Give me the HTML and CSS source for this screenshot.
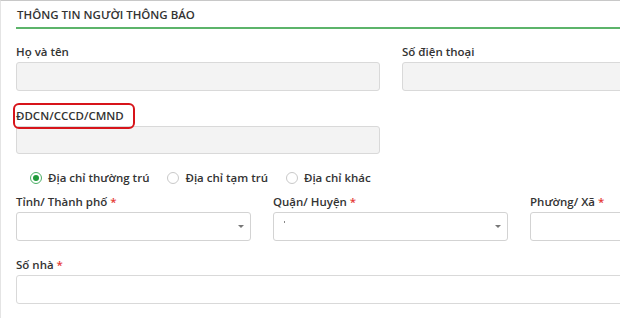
FILE: index.html
```html
<!DOCTYPE html>
<html lang="vi">
  <head>
    <meta charset="UTF-8" />
    <meta name="viewport" content="width=device-width, initial-scale=1.0" />
    <title>Thông tin người thông báo</title>
    <link rel="stylesheet" href="styles.css">
  </head>
  <body>
    <div class="panel">
      <h2 class="section-title">THÔNG TIN NGƯỜI THÔNG BÁO</h2>
      <form>
        <div class="row two-cols">
          <div class="field">
            <label for="fullname">Họ và tên</label>
            <input type="text" id="fullname" class="readonly" disabled />
          </div>
          <div class="field">
            <label for="phone">Số điện thoại</label>
            <input type="text" id="phone" class="readonly" disabled />
          </div>
        </div>

        <div class="row two-cols">
          <div class="field">
            <label for="idcard"><span class="marked">ĐDCN/CCCD/CMND</span></label>
            <input type="text" id="idcard" class="readonly" disabled />
          </div>
        </div>

        <div class="radio-row">
          <label class="radio"><span class="dot checked"></span>Địa chỉ thường trú</label>
          <label class="radio"><span class="dot"></span>Địa chỉ tạm trú</label>
          <label class="radio"><span class="dot"></span>Địa chỉ khác</label>
        </div>

        <div class="row three-cols">
          <div class="field">
            <label>Tỉnh/ Thành phố <span class="req">*</span></label>
            <div class="select"><span class="caret"></span></div>
          </div>
          <div class="field">
            <label>Quận/ Huyện <span class="req">*</span></label>
            <div class="select"><span class="speck"></span><span class="caret"></span></div>
          </div>
          <div class="field">
            <label>Phường/ Xã <span class="req">*</span></label>
            <div class="select"><span class="caret"></span></div>
          </div>
        </div>

        <div class="row">
          <div class="field">
            <label for="houseno">Số nhà <span class="req">*</span></label>
            <input type="text" id="houseno" />
          </div>
        </div>
      </form>
    </div>
  </body>
</html>
```

FILE: styles.css
```css
body {
  margin: 0;
  font-family: "Open Sans", "Noto Sans", sans-serif;
  font-size: 11.5px;
  color: #333;
  background: #fff;
  overflow: hidden;
}
.panel {
  width: 770px;
  border-top: 1px solid #c8c8c8;
  border-left: 1px solid #e4e4e4;
  padding: 0 0 20px 15px;
}
.section-title {
  margin: 0;
  padding: 6px 0 0 1px;
  height: 20px;
  line-height: 15px;
  font-size: 11.5px;
  font-weight: 600;
  color: #333;
  border-bottom: 2px solid #5cb46a;
}
form {
  padding-top: 13px;
}
.row {
  display: grid;
  gap: 22px;
}
.two-cols {
  grid-template-columns: 364px 364px;
  margin-bottom: 15px;
}
.three-cols {
  grid-template-columns: 235px 235px 235px;
  margin-bottom: 14px;
}
.field label {
  display: block;
  height: 14px;
  padding-top: 2px;
  line-height: 16px;
  margin-bottom: 4px;
  font-weight: 600;
  font-size: 11.5px;
  color: #333;
}
input {
  display: block;
  box-sizing: border-box;
  width: 100%;
  height: 29px;
  margin: 0;
  border: 1px solid #d9d9d9;
  border-radius: 3px;
  background: #fff;
  font-family: inherit;
  font-size: 12px;
}
input.readonly {
  background: #f3f3f3;
}
#idcard {
  height: 28px;
}
.req {
  color: #e53935;
}
/* red annotation frame around the id label */
.marked {
  position: relative;
}
.marked::after {
  content: "";
  position: absolute;
  left: -3px;
  right: -11px;
  top: -5px;
  bottom: -6px;
  border: 2px solid #d7141a;
  border-radius: 6px;
}
.radio-row {
  display: flex;
  gap: 18px;
  padding-left: 14px;
  margin: 0 0 7px;
  height: 16px;
  align-items: center;
}
.radio {
  display: flex;
  align-items: center;
  gap: 6px;
  font-size: 11.5px;
  font-weight: 600;
  color: #333;
  padding-top: 1px;
}
.dot {
  box-sizing: border-box;
  width: 12px;
  height: 12px;
  border: 1px solid #c9c9c9;
  border-radius: 50%;
  background: #fff;
  position: relative;
}
.dot.checked {
  border-color: #4caf67;
}
.dot.checked::after {
  content: "";
  position: absolute;
  left: 2px;
  top: 2px;
  width: 6px;
  height: 6px;
  border-radius: 50%;
  background: #1f9a3a;
}
.select {
  box-sizing: border-box;
  height: 29px;
  border: 1px solid #d3d3d3;
  border-radius: 3px;
  background: #fff;
  display: flex;
  align-items: center;
  justify-content: flex-end;
  padding-right: 6px;
  position: relative;
}
.caret {
  width: 0;
  height: 0;
  border-left: 3px solid transparent;
  border-right: 3px solid transparent;
  border-top: 3px solid #777;
}
.speck {
  position: absolute;
  left: 10px;
  top: 8px;
  width: 1px;
  height: 2px;
  background: #888;
}
```
